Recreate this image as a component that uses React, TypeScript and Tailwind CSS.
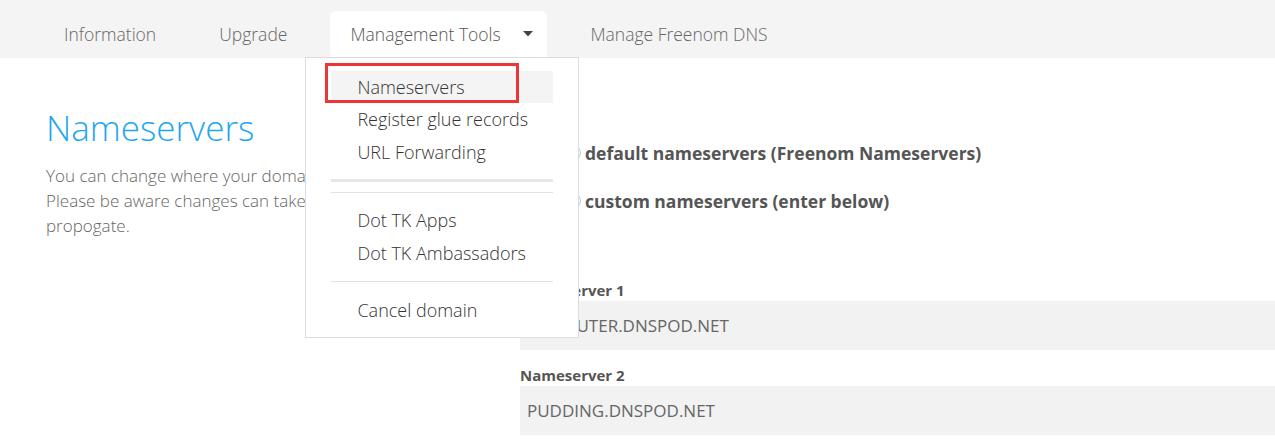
import React from "react";

const navItems = ["Information", "Upgrade", "Management Tools", "Manage Freenom DNS"];

const Dropdown = () => (
  <div className="absolute left-[-25px] top-[46px] w-[274px] h-[281px] bg-white border border-[#dcdcdc] pt-[13px] px-[25px] z-10">
    <div className="absolute left-[19px] top-[5px] w-[194px] h-[40px] border-[3px] border-[#ee3535]" />
    <div className="h-[32px] flex items-center pl-[26px] bg-[#f4f4f4] text-[18px] text-[#333]">Nameservers</div>
    <div className="h-[33px] flex items-center pl-[26px] text-[18px] text-[#333]">Register glue records</div>
    <div className="h-[33px] flex items-center pl-[26px] text-[18px] text-[#333]">URL Forwarding</div>
    <div className="mt-[10px] h-[3px] bg-[#e6e6e6]" />
    <div className="mt-[10px] h-px bg-[#e2e2e2]" />
    <div className="mt-[11px] h-[33px] flex items-center pl-[26px] text-[18px] text-[#333]">Dot TK Apps</div>
    <div className="h-[33px] flex items-center pl-[26px] text-[18px] text-[#333]">Dot TK Ambassadors</div>
    <div className="mt-[11px] h-px bg-[#e2e2e2]" />
    <div className="mt-[12px] h-[33px] flex items-center pl-[26px] text-[18px] text-[#333]">Cancel domain</div>
  </div>
);

export default function App() {
  return (
    <div className="w-[1275px] h-[441px] overflow-hidden bg-white font-['Open_Sans',sans-serif]">
      <nav className="h-[58px] bg-[#f4f4f4] flex items-end pl-[44px] gap-[23px]">
        {navItems.map((item) =>
          item === "Management Tools" ? (
            <div
              key={item}
              className="relative h-[47px] w-[217px] bg-white rounded-t-[6px] flex items-center pl-[20px] text-[17.5px] font-light text-[#555] pb-[1px]"
            >
              {item}
              <svg className="ml-[22px]" width="10" height="6" viewBox="0 0 10 6">
                <path d="M0 0h10L5 5.5z" fill="#444" />
              </svg>
              <Dropdown />
            </div>
          ) : (
            <div key={item} className="h-[47px] flex items-center px-[20px] text-[17.5px] font-light text-[#666] pb-[1px]">
              {item}
            </div>
          )
        )}
      </nav>
      <div className="flex">
        <div className="w-[520px] shrink-0 pl-[46px] pt-[47px]">
          <h1 className="text-[35px] leading-[46px] font-light text-[#1ea7ef]">Nameservers</h1>
          <p className="mt-[12px] text-[17px] leading-[25px] font-light text-[#666]">
            You can change where your domain points to here.
            <br />
            Please be aware changes can take up to 24 hours to
            <br />
            propogate.
          </p>
        </div>
        <div className="flex-1 pt-[82px]">
          <div className="flex items-center h-[26px] pl-[45px]">
            <span className="w-[16px] h-[16px] rounded-full border border-[#9bd8f7] bg-white" />
            <span className="ml-[4px] text-[17.5px] font-bold text-[#555]">default nameservers (Freenom Nameservers)</span>
          </div>
          <div className="flex items-center h-[26px] pl-[45px] mt-[22px]">
            <span className="w-[16px] h-[16px] rounded-full border border-[#9bd8f7] bg-white" />
            <span className="ml-[4px] text-[17.5px] font-bold text-[#555]">custom nameservers (enter below)</span>
          </div>
          <div className="mt-[66px]">
            <div className="text-[15px] leading-[20px] font-bold text-[#555]">Nameserver 1</div>
            <div className="mt-[1px] h-[49px] bg-[#f2f2f2] flex items-center pl-[7px] text-[17px] text-[#666]">
              COMPUTER.DNSPOD.NET
            </div>
          </div>
          <div className="mt-[15px]">
            <div className="text-[15px] leading-[20px] font-bold text-[#555]">Nameserver 2</div>
            <div className="mt-[1px] h-[49px] bg-[#f2f2f2] flex items-center pl-[7px] text-[17px] text-[#666]">
              PUDDING.DNSPOD.NET
            </div>
          </div>
        </div>
      </div>
    </div>
  );
}
